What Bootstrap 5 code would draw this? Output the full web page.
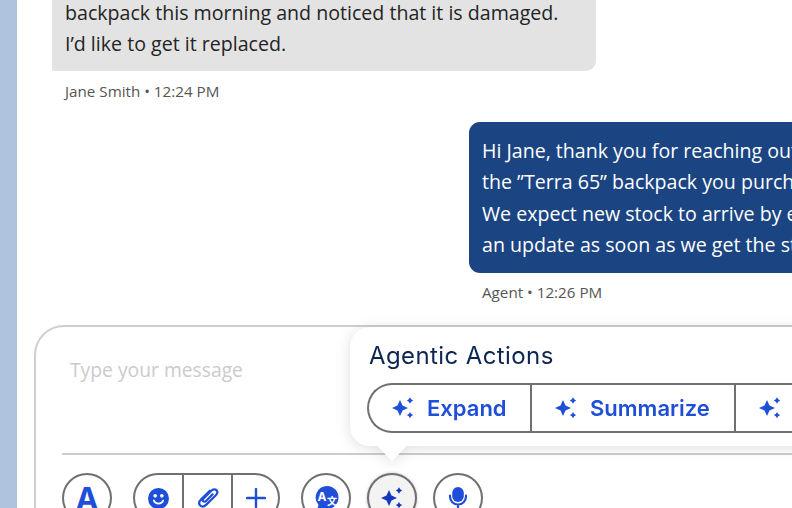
<!DOCTYPE html>
<html lang="en">
<head>
    <meta charset="UTF-8">
    <meta name="viewport" content="width=device-width, initial-scale=1.0">
    <title>Agent Chat</title>
    <link rel="stylesheet" href="https://cdn.jsdelivr.net/npm/bootstrap@5.3.0/dist/css/bootstrap.min.css">
    <style>
        html, body { height: 508px; overflow: hidden; background: #fff; }
        body { font-family: "Open Sans", "Noto Sans", sans-serif; }
        .side-strip { width: 17px; flex: none; background: #b0c3de; }
        .chat-main { width: 775px; height: 508px; overflow: hidden; }
        .thread { margin-top: -5px; padding-left: 35px; width: 1000px; }
        .bubble { font-size: 19.6px; line-height: 31.4px; padding: 2px 13px 11px; }
        .bubble-in { width: 544px; background: #e3e3e3; color: #242424; border-radius: 0 0 10px 2px; }
        .bubble-out { margin-left: 417px; margin-top: 21px; padding: 13px 13px 13px; background: #1b4482; color: #fff; border-radius: 11px; white-space: nowrap; width: 520px; }
        .meta { font-size: 15.2px; line-height: 20px; color: #555; margin-top: 10px; padding-left: 13px; }
        .meta-out { margin-left: 417px; margin-top: 9px; }
        .composer { position: relative; margin: 23px 0 0 17px; width: 900px; height: 300px; border: 2px solid #cfcfcf; border-radius: 30px 0 0 0; padding: 28px 0 0 26px; }
        .placeholder-text { font-size: 19.3px; line-height: 30px; color: #cbcbcb; margin-left: 8px; height: 98px; }
        .divider-line { height: 2px; background: #cdcdcd; margin-bottom: 18px; }
        .tool-row { gap: 16px; }
        .tool-btn { width: 50px; height: 50px; padding: 0; border: 2px solid #707070; background: #fff; color: #1f4fd8; display: flex; align-items: center; justify-content: center; }
        .tool-btn.is-active { background: #f3f3f3; color: #1537c0; box-shadow: 0 0 3px rgba(0,0,0,.25); }
        .tool-group { display: flex; height: 50px; margin-left: 5px; margin-right: 5px; border: 2px solid #707070; border-radius: 25px; overflow: hidden; background: #fff; }
        .tool-group button { width: 47px; border: 0; padding: 0; background: none; color: #1f4fd8; display: flex; align-items: center; justify-content: center; }
        .tool-group button + button { width: 49px; border-left: 2px solid #707070; }
        .tool-group button:last-child { width: 47px; }
        .letter-a { font-family: "Inter", sans-serif; font-weight: 700; font-size: 31px; line-height: 1; color: #1f4fd8; }
        .actions-pop { position: absolute; left: 314px; top: 0; width: 600px; height: 119px; background: #fff; border-radius: 20px 0 0 20px; padding: 14px 0 0 19px; filter: drop-shadow(0 2px 7px rgba(0,0,0,.13)); }
        .actions-pop::after { content: ""; position: absolute; left: 27px; top: 118px; width: 30px; height: 16px; background: #fff; clip-path: polygon(0 0, 100% 0, 50% 100%); }
        .actions-title { font-family: "Inter", sans-serif; font-size: 24px; line-height: 30px; color: #0d2552; margin: 0 0 12px; font-weight: 400; letter-spacing: .4px; }
        .action-group { margin-left: -2px; height: 50px; border: 2px solid #707070; border-right: 0; border-radius: 25px 0 0 25px; }
        .action-btn { display: flex; align-items: center; gap: 13px; height: 46px; border: 0; background: none; padding: 0; font-family: "Inter", sans-serif; font-size: 22px; font-weight: 600; color: #1f4fd8; }
        .action-btn + .action-btn { border-left: 2px solid #707070; }
        .action-expand { width: 161px; padding-left: 23px; }
        .action-summarize { width: 204px; padding-left: 23px; }
        .action-third { width: 100px; padding-left: 23px; }
    </style>
</head>
<body class="d-flex">

    <div class="side-strip"></div>

    <div class="chat-main">
        <div class="thread">
            <!-- Customer message -->
            <div class="bubble bubble-in">backpack this morning and noticed that it is damaged.<br>I’d like to get it replaced.</div>
            <div class="meta">Jane Smith • 12:24 PM</div>

            <!-- Agent reply -->
            <div class="bubble bubble-out">Hi Jane, thank you for reaching out<br>the ”Terra 65” backpack you purchased<br>We expect new stock to arrive by early<br>an update as soon as we get the stock</div>
            <div class="meta meta-out">Agent • 12:26 PM</div>
        </div>

        <!-- Composer -->
        <div class="composer">
            <div class="placeholder-text">Type your message</div>
            <div class="divider-line"></div>
            <div class="d-flex tool-row">
                <button class="tool-btn rounded-circle"><span class="letter-a">A</span></button>
                <div class="tool-group">
                    <button>
                        <svg width="21" height="21" viewBox="0 0 22 22"><circle cx="11" cy="11" r="11" fill="currentColor"/><circle cx="7.500" cy="8.200" r="1.900" fill="#fff"/><circle cx="14.500" cy="8.200" r="1.900" fill="#fff"/><path d="M6 13c1 2.400 3 3.400 5 3.400s4-1 5-3.400" fill="none" stroke="#fff" stroke-width="1.700" stroke-linecap="round"/></svg>
                    </button>
                    <button>
                        <svg width="22" height="22" viewBox="0 0 24 24" fill="none" stroke="currentColor" stroke-width="2.400" stroke-linecap="round" stroke-linejoin="round"><path d="M14 4 4.500 13.500c-2.300 2.300-2.700 5-1 6.700s4.400 1.300 6.700-1L20.500 9c1.900-1.900 2.100-4.200.7-5.600s-3.700-1.200-5.600.7L7.200 12.500c-1 1-1.200 2.300-.4 3.100s2.100.6 3.100-.4L17 8"/></svg>
                    </button>
                    <button>
                        <svg width="20" height="20" viewBox="0 0 20 20" stroke="currentColor" stroke-width="2.400" stroke-linecap="round"><path d="M10 1v18M1 10h18"/></svg>
                    </button>
                </div>
                <button class="tool-btn rounded-circle">
                    <svg width="26" height="26" viewBox="0 0 26 26"><path d="M14 1a11.500 11.500 0 0 1 0 23c-1.500 0-3-.3-4.300-.8L4 25l1.500-5A11.500 11.500 0 0 1 14 1z" fill="currentColor"/><text x="4.500" y="15.500" font-family="Inter, sans-serif" font-size="12" font-weight="700" fill="#fff">A</text><text x="14" y="20" font-family="'Noto Sans CJK SC', sans-serif" font-size="10" font-weight="700" fill="#fff">文</text></svg>
                </button>
                <button class="tool-btn rounded-circle is-active">
                    <svg width="22" height="22" viewBox="0 0 22 22" fill="currentColor"><path d="M8 3 10.500 8.500 16 11 10.500 13.500 8 19 5.500 13.500 0 11 5.500 8.500z"/><path d="M18 .3 19.200 2.300 21.200 3.500 19.200 4.700 18 6.700 16.800 4.700 14.800 3.500 16.800 2.300zM18 14.900 19.200 16.900 21.200 18.100 19.200 19.300 18 21.300 16.800 19.300 14.800 18.100 16.800 16.900z"/></svg>
                </button>
                <button class="tool-btn rounded-circle">
                    <svg width="22" height="28" viewBox="0 0 22 28" fill="none" stroke="currentColor" stroke-width="2.200" stroke-linecap="round"><rect x="5.200" y="3" width="11.600" height="15" rx="5.800" fill="currentColor" stroke="none"/><path d="M3 11.500v1a8 8 0 0 0 16 0v-1M11 20.500V26M7 26.500h8"/></svg>
                </button>
            </div>

            <!-- Agentic actions popover -->
            <div class="actions-pop">
                <h2 class="actions-title">Agentic Actions</h2>
                <div class="btn-group action-group">
                    <button class="action-btn action-expand">
                        <svg width="22" height="22" viewBox="0 0 22 22" fill="currentColor"><path d="M8 3 10.500 8.500 16 11 10.500 13.500 8 19 5.500 13.500 0 11 5.500 8.500z"/><path d="M18 .3 19.200 2.300 21.200 3.500 19.200 4.700 18 6.700 16.800 4.700 14.800 3.500 16.800 2.300zM18 14.900 19.200 16.900 21.200 18.100 19.200 19.300 18 21.300 16.800 19.300 14.800 18.100 16.800 16.900z"/></svg>
                        Expand
                    </button>
                    <button class="action-btn action-summarize">
                        <svg width="22" height="22" viewBox="0 0 22 22" fill="currentColor"><path d="M8 3 10.500 8.500 16 11 10.500 13.500 8 19 5.500 13.500 0 11 5.500 8.500z"/><path d="M18 .3 19.200 2.300 21.200 3.500 19.200 4.700 18 6.700 16.800 4.700 14.800 3.500 16.800 2.300zM18 14.900 19.200 16.900 21.200 18.100 19.200 19.300 18 21.300 16.800 19.300 14.800 18.100 16.800 16.900z"/></svg>
                        Summarize
                    </button>
                    <button class="action-btn action-third">
                        <svg width="22" height="22" viewBox="0 0 22 22" fill="currentColor"><path d="M8 3 10.500 8.500 16 11 10.500 13.500 8 19 5.500 13.500 0 11 5.500 8.500z"/><path d="M18 .3 19.200 2.300 21.200 3.500 19.200 4.700 18 6.700 16.800 4.700 14.800 3.500 16.800 2.300zM18 14.900 19.200 16.900 21.200 18.100 19.200 19.300 18 21.300 16.800 19.300 14.800 18.100 16.800 16.900z"/></svg>
                    </button>
                </div>
            </div>
        </div>
    </div>

</body>
</html>
